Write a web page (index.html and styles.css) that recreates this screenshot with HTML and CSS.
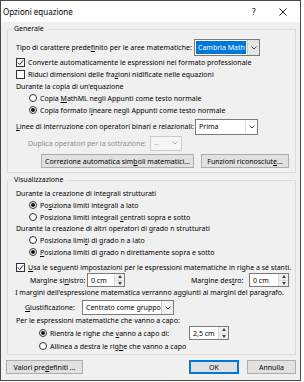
FILE: index.html
```html
<!DOCTYPE html>
<html lang="it">
<head>
    <meta charset="UTF-8">
    <title>Opzioni equazione</title>
    <link rel="stylesheet" href="styles.css">
</head>
<body>
<div class="dialog">
    <div class="titlebar">
        <span class="title">Opzioni equazione</span>
        <span class="help">?</span>
        <span class="close">
            <svg width="8" height="8" viewBox="0 0 8 8"><path d="M0.5 0.5L7.5 7.5M7.5 0.5L0.5 7.5" stroke="#222" stroke-width="1"/></svg>
        </span>
    </div>

    <div class="content">
        <fieldset class="group g1">
            <legend>Generale</legend>

            <div class="row r-font">
                <span class="grow">Tipo di carattere prede<u>f</u>inito per le aree matematiche:</span>
                <div class="select sel-font">
                    <span class="val selected">Cambria Math</span>
                    <span class="arrow"><svg width="6" height="4" viewBox="0 0 6 4"><path d="M0.5 0.5L3 3L5.5 0.5" fill="none" stroke="#444"/></svg></span>
                </div>
            </div>
            <div class="row h12"><span class="check on"><svg width="7" height="7" viewBox="0 0 7 7"><path d="M0.8 3.6L2.7 5.5L6.2 1.2" fill="none" stroke="#222" stroke-width="1"/></svg></span><span>Converte automaticamente le espressioni nel formato professionale</span></div>
            <div class="row h13"><span class="check"></span><span>Riduci dimensioni delle fra<u>z</u>ioni nidificate nelle equazioni</span></div>
            <div class="row h11"><span>Durante la copia di un'equazione</span></div>
            <div class="row h12 ind"><span class="radio"></span><span>Copia <u>M</u>athML negli Appunti come testo normale</span></div>
            <div class="row h12 ind"><span class="radio on"></span><span>Copia formato l<u>i</u>neare negli Appunti come testo normale</span></div>

            <div class="row r-linee">
                <span class="lbl-linee"><u>L</u>inee di interruzione con operatori binari e relazionali:</span>
                <div class="select sel-linee">
                    <span class="val">Prima</span>
                    <span class="arrow"><svg width="6" height="4" viewBox="0 0 6 4"><path d="M0.5 0.5L3 3L5.5 0.5" fill="none" stroke="#444"/></svg></span>
                </div>
            </div>
            <div class="row r-dup disabled">
                <span class="lbl-dup">Duplica operatori per la sottrazione:</span>
                <div class="select sel-dup">
                    <span class="val">--</span>
                    <span class="arrow"><svg width="6" height="4" viewBox="0 0 6 4"><path d="M0.5 0.5L3 3L5.5 0.5" fill="none" stroke="#aaa"/></svg></span>
                </div>
            </div>
            <div class="row r-btns">
                <span class="btn btn-corr"><span>Correzione automatica sim<u>b</u>oli matematici...</span></span>
                <span class="btn btn-funz"><span>Funzioni riconosciut<u>e</u>...</span></span>
            </div>
        </fieldset>

        <fieldset class="group g2">
            <legend>Visualizzazione</legend>

            <div class="row h12"><span>Durante la creazione di integrali strutturati</span></div>
            <div class="row h12 ind"><span class="radio on"></span><span>Po<u>s</u>iziona limiti integrali a lato</span></div>
            <div class="row h12 ind"><span class="radio"></span><span>Posiziona limiti integrali <u>c</u>entrati sopra e sotto</span></div>
            <div class="row h11"><span>Durante la creazione di altri operatori di grado n strutturati</span></div>
            <div class="row h12 ind"><span class="radio"></span><span>Posiziona limi<u>t</u>i di grado n a lato</span></div>
            <div class="row h12 ind"><span class="radio on"></span><span><u>P</u>osiziona limiti di grado n direttamente sopra e sotto</span></div>
            <div class="row h12 r-usa"><span class="check on"><svg width="7" height="7" viewBox="0 0 7 7"><path d="M0.8 3.6L2.7 5.5L6.2 1.2" fill="none" stroke="#222" stroke-width="1"/></svg></span><span><u>U</u>sa le seguenti impostazioni per le espressioni matematiche in righe a sé stanti.</span></div>

            <div class="row r-margins">
                <span class="lbl-sx">Margine si<u>n</u>istro:</span>
                <span class="spin spin-sx"><span class="val">0 cm</span><span class="arrows"><i class="up"></i><i class="down"></i></span></span>
                <span class="lbl-dx">Margine des<u>t</u>ro:</span>
                <span class="spin spin-dx"><span class="val">0 cm</span><span class="arrows"><i class="up"></i><i class="down"></i></span></span>
            </div>
            <div class="row r-note"><span>I margini dell'espressione matematica verranno aggiunti ai margini del paragrafo.</span></div>

            <div class="row r-giust">
                <span class="lbl-giust"><u>G</u>iustificazione:</span>
                <div class="select sel-giust">
                    <span class="val">Centrato come gruppo</span>
                    <span class="arrow"><svg width="6" height="4" viewBox="0 0 6 4"><path d="M0.5 0.5L3 3L5.5 0.5" fill="none" stroke="#444"/></svg></span>
                </div>
            </div>
            <div class="row h11"><span>Per le espressioni matematiche che vanno a capo:</span></div>
            <div class="row r-rientra">
                <span class="lbl-rientra"><span class="radio on"></span><span>Rientra le righe che <u>v</u>anno a capo di:</span></span>
                <span class="spin spin-rientra"><span class="val">2,5 cm</span><span class="arrows"><i class="up"></i><i class="down"></i></span></span>
            </div>
            <div class="row h12 ind2"><span class="radio"></span><span>Allinea a destra le rig<u>h</u>e che vanno a capo</span></div>
        </fieldset>
    </div>

    <div class="footer">
        <span class="btn btn-def"><span>Valori pre<u>d</u>efiniti ...</span></span>
        <span class="spacer"></span>
        <span class="btn btn-ok">OK</span>
        <span class="btn btn-cancel">Annulla</span>
    </div>
</div>
</body>
</html>
```

FILE: styles.css
```css
* {
    box-sizing: border-box;
}
body {
    margin: 0;
    background: #fff;
    font-family: "Noto Sans", "Open Sans", sans-serif;
    font-size: 7px;
    color: #000;
}
u {
    text-decoration-thickness: 1px;
    text-underline-offset: 1px;
}

.dialog {
    width: 301px;
    height: 381px;
    border: 1px solid #4a4a4a;
    background: #f0f0f0;
    display: flex;
    flex-direction: column;
}

/* title bar */
.titlebar {
    height: 21px;
    flex: none;
    background: #fff;
    display: flex;
    align-items: center;
    padding-left: 2px;
    font-size: 8px;
}
.title {
    flex: 1;
}
.help {
    width: 27px;
    font-size: 8.5px;
}
.close {
    width: 21px;
    display: flex;
    align-items: center;
}

.content {
    padding: 2px 4px 0 6px;
}

/* group boxes */
.group {
    margin: 0;
    border: 1px solid #dcdcdc;
    padding: 5px 4px 4px 8px;
    min-width: 0;
}
.group legend {
    line-height: 10px;
    padding: 0 2px;
    margin-left: -4px;
}
.g2 {
    margin-top: 2px;
    padding-top: 2px;
    padding-bottom: 2px;
}

.row {
    display: flex;
    align-items: center;
    white-space: nowrap;
}
.h11 { height: 11px; }
.h12 { height: 12px; }
.h13 { height: 13px; }
.ind { padding-left: 13px; }
.ind2 { padding-left: 23px; }
.grow { flex: 1; }

/* check boxes and radios */
.check {
    width: 9px;
    height: 9px;
    border: 1px solid #333;
    background: #fff;
    margin-right: 3px;
    display: flex;
    align-items: center;
    justify-content: center;
}
.radio {
    width: 8px;
    height: 8px;
    border: 1px solid #333;
    border-radius: 50%;
    background: #fff;
    margin-right: 3px;
    display: inline-flex;
    align-items: center;
    justify-content: center;
    flex: none;
}
.radio.on::after {
    content: "";
    width: 4px;
    height: 4px;
    border-radius: 50%;
    background: #111;
}

/* drop down lists */
.select {
    display: flex;
    background: #fff;
    border: 1px solid #7a7a7a;
}
.select .val {
    flex: 1;
    display: flex;
    align-items: center;
    padding-left: 3px;
}
.select .val.selected {
    background: #0078d7;
    color: #fff;
    margin: 1px;
    padding-left: 2px;
}
.select .arrow {
    width: 12px;
    display: flex;
    align-items: center;
    justify-content: center;
    background: #f0f0f0;
    border-left: 1px solid #c8c8c8;
}
.r-font {
    height: 17px;
    padding-right: 31px;
}
.sel-font {
    width: 66px;
    height: 17px;
}
.sel-font .arrow {
    background: #e5e5e5;
}

.r-linee {
    height: 17px;
    margin-top: 2px;
}
.lbl-linee {
    width: 179px;
}
.sel-linee {
    width: 63px;
    height: 16px;
}
.sel-linee .arrow {
    background: #fff;
    border-left: 1px solid #e0e0e0;
}

.r-dup {
    height: 16px;
}
.disabled {
    color: #8d8d8d;
}
.lbl-dup {
    padding-left: 12px;
    width: 134px;
}
.sel-dup {
    width: 32px;
    height: 15px;
    background: #f5f5f5;
    border-color: #cccccc;
    color: #9a9a9a;
}
.sel-dup .arrow {
    background: #f5f5f5;
    border-left: none;
}

/* buttons */
.btn {
    display: flex;
    align-items: center;
    justify-content: center;
    height: 14px;
    background: #e1e1e1;
    border: 1px solid #adadad;
}
.r-btns {
    height: 14px;
    margin-top: 3px;
    padding-left: 25px;
}
.btn-corr {
    width: 153px;
}
.btn-funz {
    width: 88px;
    margin-left: 7px;
}

/* visualizzazione */
.r-usa {
    margin-top: 3px;
}
.r-margins {
    height: 14px;
    padding-left: 14px;
}
.lbl-sx {
    width: 57px;
}
.lbl-dx {
    width: 58px;
    margin-left: 66px;
}
.spin {
    display: flex;
    height: 14px;
    background: #fff;
    border: 1px solid #7a7a7a;
}
.spin .val {
    flex: 1;
    display: flex;
    align-items: center;
    padding-left: 3px;
}
.spin .arrows {
    width: 10px;
    display: flex;
    flex-direction: column;
    background: #f0f0f0;
    border-left: 1px solid #dadada;
}
.spin .arrows i {
    flex: 1;
    display: flex;
    align-items: center;
    justify-content: center;
}
.spin .arrows i::after {
    content: "";
    border-left: 2.5px solid transparent;
    border-right: 2.5px solid transparent;
}
.spin .up::after {
    border-bottom: 3px solid #444;
}
.spin .down::after {
    border-top: 3px solid #444;
}
.spin .up {
    border-bottom: 1px solid #dadada;
}
.spin-sx {
    width: 38px;
}
.spin-dx {
    width: 40px;
}

.r-note {
    height: 10px;
    justify-content: center;
    margin-left: -8px;
}

.r-giust {
    height: 15px;
    margin-top: 3px;
    padding-left: 9px;
}
.lbl-giust {
    width: 57px;
}
.sel-giust {
    width: 92px;
    height: 15px;
}

.r-rientra {
    height: 14px;
    padding-left: 23px;
}
.lbl-rientra {
    width: 150px;
    display: flex;
    align-items: center;
}
.spin-rientra {
    width: 40px;
}

/* footer */
.footer {
    display: flex;
    margin-top: 5px;
    padding: 0 4px 0 5px;
}
.spacer {
    flex: 1;
}
.btn-def {
    width: 77px;
}
.btn-ok {
    width: 50px;
    border-color: #0078d7;
    box-shadow: inset 0 0 0 1px #0078d7;
}
.btn-cancel {
    width: 49px;
    margin-left: 8px;
}
```
